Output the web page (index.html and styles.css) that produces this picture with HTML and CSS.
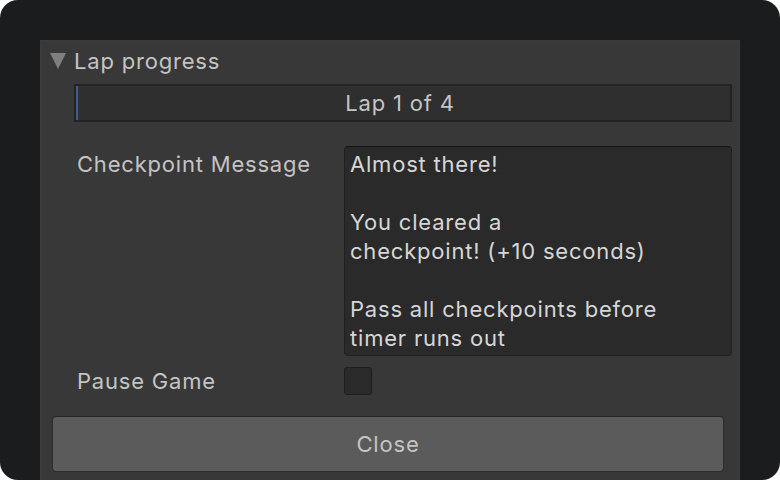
FILE: index.html
```html
<!DOCTYPE html>
<html>
<head>
<meta charset="utf-8">
<link rel="stylesheet" href="styles.css">
</head>
<body>
<div class="frame">
  <div class="panel">
    <div class="foldout">
      <span class="tri"></span>
      <span class="foldout-title">Lap progress</span>
    </div>
    <div class="progress">
      <div class="progress-fill" style="width:2px"></div>
      <div class="progress-label">Lap 1 of 4</div>
    </div>
    <div class="field field-message">
      <div class="field-label">Checkpoint Message</div>
      <div class="textarea">Almost there!<br><br>You cleared a<br>checkpoint! (+10 seconds)<br><br>Pass all checkpoints before<br>timer runs out</div>
    </div>
    <div class="field field-toggle">
      <div class="field-label">Pause Game</div>
      <div class="checkbox"></div>
    </div>
    <div class="button">Close</div>
  </div>
</div>
</body>
</html>
```

FILE: styles.css
```css
html, body {
  margin: 0;
  padding: 0;
  background: #ffffff;
}
.frame {
  width: 780px;
  height: 480px;
  box-sizing: border-box;
  background: #1b1c1e;
  border-radius: 18px;
  padding: 40px 40px 0 40px;
  overflow: hidden;
  font-family: Inter, "Noto Sans", sans-serif;
  font-size: 22px;
  letter-spacing: 0.8px;
  color: #c4c4c4;
}
.panel {
  height: 460px;
  box-sizing: border-box;
  background: #383838;
  border: 2px solid #3b3b3b;
  display: flex;
  flex-direction: column;
}
.foldout {
  display: flex;
  align-items: center;
  gap: 8px;
  padding: 6px 0 0 8px;
  height: 26px;
  line-height: 26px;
}
.tri {
  width: 0;
  height: 0;
  border-left: 8.5px solid transparent;
  border-right: 8.5px solid transparent;
  border-top: 16px solid #7f7f7f;
  margin-top: -1px;
}
.foldout-title {
  color: #c4c4c4;
}
.progress {
  position: relative;
  margin: 10px 6px 0 32px;
  height: 38px;
  box-sizing: border-box;
  background: #2f2f2f;
  border: 2px solid #232323;
  display: flex;
  align-items: center;
  justify-content: center;
}
.progress-fill {
  position: absolute;
  left: 0;
  top: 0;
  bottom: 0;
  background: #3a5c9c;
}
.progress-label {
  color: #c4c4c4;
  line-height: 30px;
  margin-left: -6px;
}
.field {
  display: flex;
  align-items: flex-start;
  padding-left: 35px;
}
.field-label {
  width: 267px;
  flex: none;
  color: #c4c4c4;
}
.field-message {
  margin-top: 24px;
}
.field-message .field-label {
  padding-top: 4px;
  line-height: 29px;
}
.textarea {
  width: 388px;
  box-sizing: border-box;
  background: #2a2a2a;
  border: 1px solid #202020;
  border-top-color: #151515;
  border-radius: 4px;
  padding: 3px 6px 2px 5px;
  line-height: 29px;
  color: #d6d6d6;
}
.field-toggle {
  margin-top: 10px;
  align-items: center;
}
.field-toggle .field-label {
  line-height: 28px;
  margin-top: 1px;
}
.checkbox {
  width: 28px;
  height: 28px;
  box-sizing: border-box;
  background: #2a2a2a;
  border: 1px solid #1e1e1e;
  border-radius: 3px;
}
.button {
  margin: 21px 14px 0 10px;
  height: 56px;
  box-sizing: border-box;
  background: #5b5b5b;
  border: 1px solid #2c2c2c;
  border-top-color: #262626;
  border-radius: 4px;
  display: flex;
  align-items: center;
  justify-content: center;
  color: #c4c4c4;
}
```
